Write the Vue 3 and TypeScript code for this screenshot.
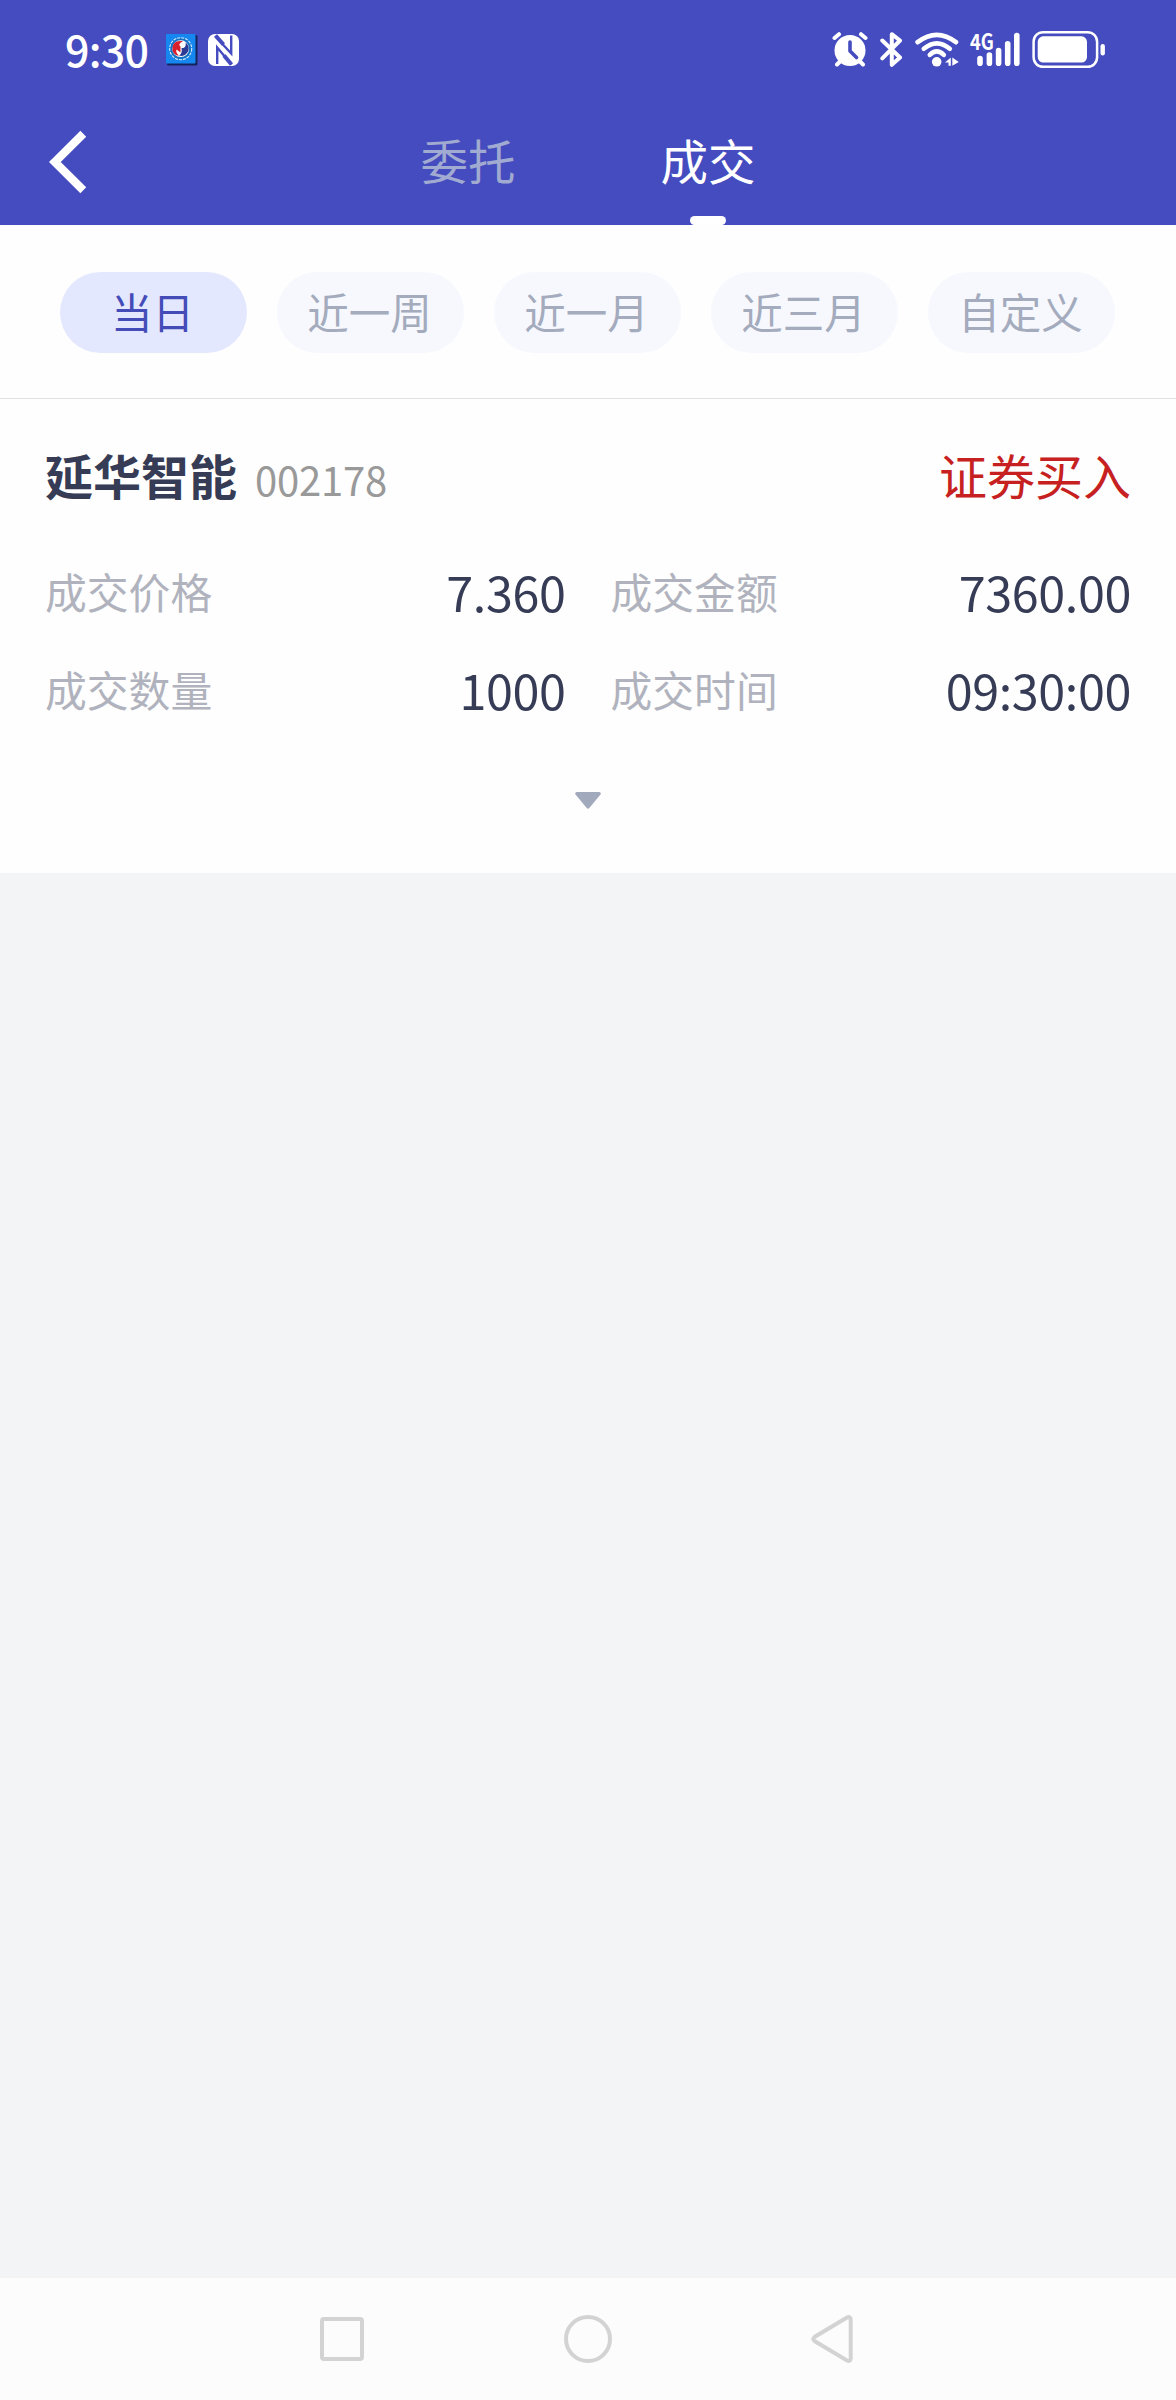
<script setup lang="ts">
import { ref } from 'vue'

interface Field {
  label: string
  value: string
}

const tabs: string[] = ['委托', '成交']
const activeTab = ref(1)

const ranges: string[] = ['当日', '近一周', '近一月', '近三月', '自定义']
const activeRange = ref(0)

const fields: Field[] = [
  { label: '成交价格', value: '7.360' },
  { label: '成交金额', value: '7360.00' },
  { label: '成交数量', value: '1000' },
  { label: '成交时间', value: '09:30:00' },
]
</script>

<template>
  <div class="screen">
    <header class="header">
      <div class="status">
        <span class="clock">9:30</span>
        <svg class="app-badge" width="32" height="32" viewBox="0 0 32 32">
          <rect x="1" y="1" width="30.5" height="30.5" rx="1.5" fill="#14245c" />
          <rect width="29.5" height="29.5" rx="1" fill="#1687f0" />
          <circle cx="14.7" cy="14.7" r="11" fill="#1673c4" stroke="#d8efff" stroke-width="1.1" stroke-dasharray="3 1" />
          <circle cx="14.7" cy="14.7" r="8.4" fill="#fff" />
          <path d="M6.500 16C6 9 11 6 17 7.500C13.500 8.500 12.500 11 14.500 12.500V18.500L10.500 15.500C9.500 17.500 11 20 13 21.500C9.500 21.500 7 19.500 6.500 16z" fill="#d8202c" />
          <path d="M13 21.500C16 19.500 16 17 15.500 14C18.500 14.500 20.500 12 19.500 8.500C23 11 24 15.500 21 19C19 21.500 16 22.500 13 21.500z" fill="#2c3c94" />
        </svg>
        <svg class="nfc" width="32" height="32" viewBox="0 0 32 32">
          <rect width="31" height="32" rx="7" fill="#fff" />
          <g fill="none" stroke="#444cbf">
            <path d="M7.500 2.500L23.200 19.500V1.500" stroke-width="2.400" />
            <path d="M7.500 1.500L15.500 10.500" stroke-width="4" />
            <path d="M23.500 30.500L9.200 13.500V30" stroke-width="2.400" />
            <path d="M16 21.500L23.500 30.500" stroke-width="4" />
          </g>
        </svg>

        <div class="indicators">
          <svg class="alarm" width="36" height="40" viewBox="0 0 36 40">
            <circle cx="18" cy="20.500" r="15.500" fill="#fff" />
            <g stroke="#fff" stroke-width="4" stroke-linecap="round">
              <path d="M2.500 8L7 4.200M33.500 8L29 4.200M8 31.500L5 34.500M28 31.500L31 34.500" />
            </g>
            <path d="M18 12V21L24.500 27.500" fill="none" stroke="#444cbf" stroke-width="3.600" stroke-linecap="round" stroke-linejoin="round" />
          </svg>
          <svg class="bluetooth" width="23" height="40" viewBox="0 0 23 40">
            <path d="M2.300 10.500L20 27.500L11.800 34.800V4.200L20 10.500L2.300 28.300" fill="none" stroke="#fff" stroke-width="4" stroke-linecap="round" stroke-linejoin="round" />
          </svg>
          <svg class="wifi" width="45" height="40" viewBox="0 0 45 40">
            <g fill="none" stroke="#fff" stroke-width="4.600" stroke-linecap="round">
              <path d="M2.600 12.200Q21.800-2.500 41 12.200" />
              <path d="M8.800 18.800Q21.800 8 34.800 18.800" />
              <path d="M14.800 24.800Q21.800 18 28.800 24.800" />
            </g>
            <circle cx="21.700" cy="31.800" r="4.800" fill="#fff" />
            <path d="M30 32.500L35.800 27.500V35.700H33.500V32.500zM37.300 27.500L43.800 32L37.300 35.700z" fill="#fff" />
          </svg>
          <div class="signal">
            <span class="network">4G</span>
            <svg width="52" height="40" viewBox="0 0 52 40">
              <g stroke="#fff" stroke-width="5.600" stroke-linecap="round">
                <path d="M11 28.500V33.300M20.400 25V33.300M29.600 20.500V33.300M38.700 13.700V33.300M47.800 5.500V33.300" />
              </g>
            </svg>
          </div>
          <svg class="battery" width="74" height="40" viewBox="0 0 74 40">
            <rect x="1.600" y="2.200" width="63.500" height="34.600" rx="9.500" fill="none" stroke="#fff" stroke-width="2.500" />
            <rect x="5.700" y="6.300" width="49.300" height="26.300" rx="5.500" fill="#fff" />
            <rect x="68.500" y="14" width="4.400" height="11.500" rx="2.200" fill="#fff" />
          </svg>
        </div>
      </div>

      <nav class="tabbar">
        <button class="back" aria-label="返回">
          <svg width="38" height="64" viewBox="0 0 38 64">
            <path d="M34.300 3.800L5.800 32L34.300 60.200" fill="none" stroke="#fff" stroke-width="8.300" />
          </svg>
        </button>
        <div class="tabs">
          <button
            v-for="(tab, i) in tabs"
            :key="tab"
            class="tab"
            :class="{ active: i === activeTab }"
            @click="activeTab = i"
          >{{ tab }}</button>
        </div>
      </nav>
    </header>

    <section class="ranges">
      <button
        v-for="(range, i) in ranges"
        :key="range"
        class="range"
        :class="{ active: i === activeRange }"
        @click="activeRange = i"
      >{{ range }}</button>
    </section>

    <article class="trade">
      <div class="title">
        <span class="name">延华智能</span>
        <span class="code">002178</span>
        <span class="side">证券买入</span>
      </div>
      <dl class="fields">
        <div v-for="field in fields" :key="field.label" class="field">
          <dt>{{ field.label }}</dt>
          <dd>{{ field.value }}</dd>
        </div>
      </dl>
      <svg class="expand" width="26" height="17" viewBox="0 0 26 17">
        <path d="M1.500 0H24.500Q26.500 .8 25.500 2.500L14.500 15.800Q13 17.600 11.500 15.800L.5 2.500Q-.5 .8 1.500 0z" fill="#a1aabd" />
      </svg>
    </article>

    <main class="blank"></main>

    <footer class="system-nav">
      <svg width="44" height="44" viewBox="0 0 44 44">
        <rect x="2" y="2" width="40" height="40" rx="2" />
      </svg>
      <svg width="48" height="48" viewBox="0 0 48 48">
        <circle cx="24" cy="24" r="22" />
      </svg>
      <svg width="42" height="48" viewBox="0 0 42 48">
        <path d="M36 2.500L3.500 22Q1 24 3.500 26L36 45.500Q39.500 47 39.700 43.500V4.500Q39.500 1 36 2.500z" />
      </svg>
    </footer>
  </div>
</template>

<style>
body {
  margin: 0;
}
</style>

<style scoped>
.screen {
  display: flex;
  flex-direction: column;
  width: 1176px;
  height: 2400px;
  background: #f3f4f6;
  font-family: "Noto Sans CJK SC", "Noto Sans", sans-serif;
}

button {
  padding: 0;
  border: 0;
  background: none;
  font: inherit;
}

.header {
  height: 225px;
  background: #444cbf;
  color: #fff;
}

.status {
  display: flex;
  align-items: center;
  height: 100px;
  padding: 0 70px 0 65px;
  box-sizing: border-box;
}

.clock {
  width: 101px;
  padding-bottom: 5px;
  font-size: 43px;
  font-weight: 500;
  letter-spacing: -0.8px;
  line-height: 60px;
}

.nfc {
  margin-left: 10px;
}

.indicators {
  display: flex;
  margin-left: auto;
}

.bluetooth,
.wifi {
  margin-left: 12px;
}

.signal {
  position: relative;
  width: 52px;
  height: 40px;
  margin-left: 9px;
}

.battery {
  margin-left: 11px;
}

.network {
  position: absolute;
  left: 1px;
  top: -6px;
  font-size: 22px;
  font-weight: 700;
  line-height: 33px;
  transform: scaleX(0.83);
  transform-origin: left center;
}

.tabbar {
  display: grid;
  grid-template-columns: 348px 480px 1fr;
  height: 125px;
}

.back {
  display: flex;
  align-items: center;
  padding-left: 49px;
  height: 124px;
}

.tabs {
  display: grid;
  grid-template-columns: 1fr 1fr;
}

.tab {
  position: relative;
  color: #a1aad0;
  font-size: 47.5px;
  line-height: 70px;
  padding-bottom: 5px;
}

.tab.active {
  color: #fff;
}

.tab.active::after {
  content: "";
  position: absolute;
  left: 102px;
  bottom: 0;
  width: 36px;
  height: 9px;
  border-radius: 4.5px;
  background: #fff;
}

.ranges {
  display: grid;
  grid-template-columns: repeat(5, 187px);
  gap: 30px;
  height: 174px;
  padding: 47px 60px 45px;
  box-sizing: border-box;
  border-bottom: 1px solid #e1e2e4;
  background: #fefefe;
}

.range {
  height: 81px;
  border-radius: 41px;
  background: #f6f8fd;
  color: #a3abbd;
  font-size: 41.5px;
  line-height: 76px;
  padding: 0 2px 4px 0;
}

.range.active {
  background: #e4e8fe;
  color: #444cb8;
}

.trade {
  display: flex;
  flex-direction: column;
  height: 474px;
  padding: 40px 45px 0;
  box-sizing: border-box;
  background: #fefefe;
}

.title {
  display: flex;
  align-items: baseline;
  height: 70px;
  line-height: 70px;
  font-size: 48px;
}

.name {
  color: #363c55;
  font-weight: 700;
}

.code {
  position: relative;
  top: 1px;
  margin-left: 18px;
  color: #999;
  font-size: 40px;
  letter-spacing: -0.2px;
}

.side {
  margin-left: auto;
  color: #c62020;
}

.fields {
  display: grid;
  grid-template-columns: 1fr 1fr;
  grid-auto-rows: 98px;
  column-gap: 45px;
  margin: 33px 0 0;
}

.field {
  display: flex;
  align-items: center;
  justify-content: space-between;
}

dt {
  color: #b0b3bd;
  font-size: 41.8px;
  line-height: 60px;
}

dd {
  margin: 0;
  color: #363c55;
  font-size: 48.5px;
  letter-spacing: -0.4px;
  line-height: 60px;
}

.expand {
  align-self: center;
  margin-top: 54px;
}

.blank {
  flex: 1;
}

.system-nav {
  display: flex;
  align-items: center;
  justify-content: space-between;
  height: 122px;
  padding: 0 323px 0 320px;
  box-sizing: border-box;
  background: #fcfcfc;
}

.system-nav svg {
  fill: none;
  stroke: #d3d3d3;
  stroke-width: 4;
}
</style>
